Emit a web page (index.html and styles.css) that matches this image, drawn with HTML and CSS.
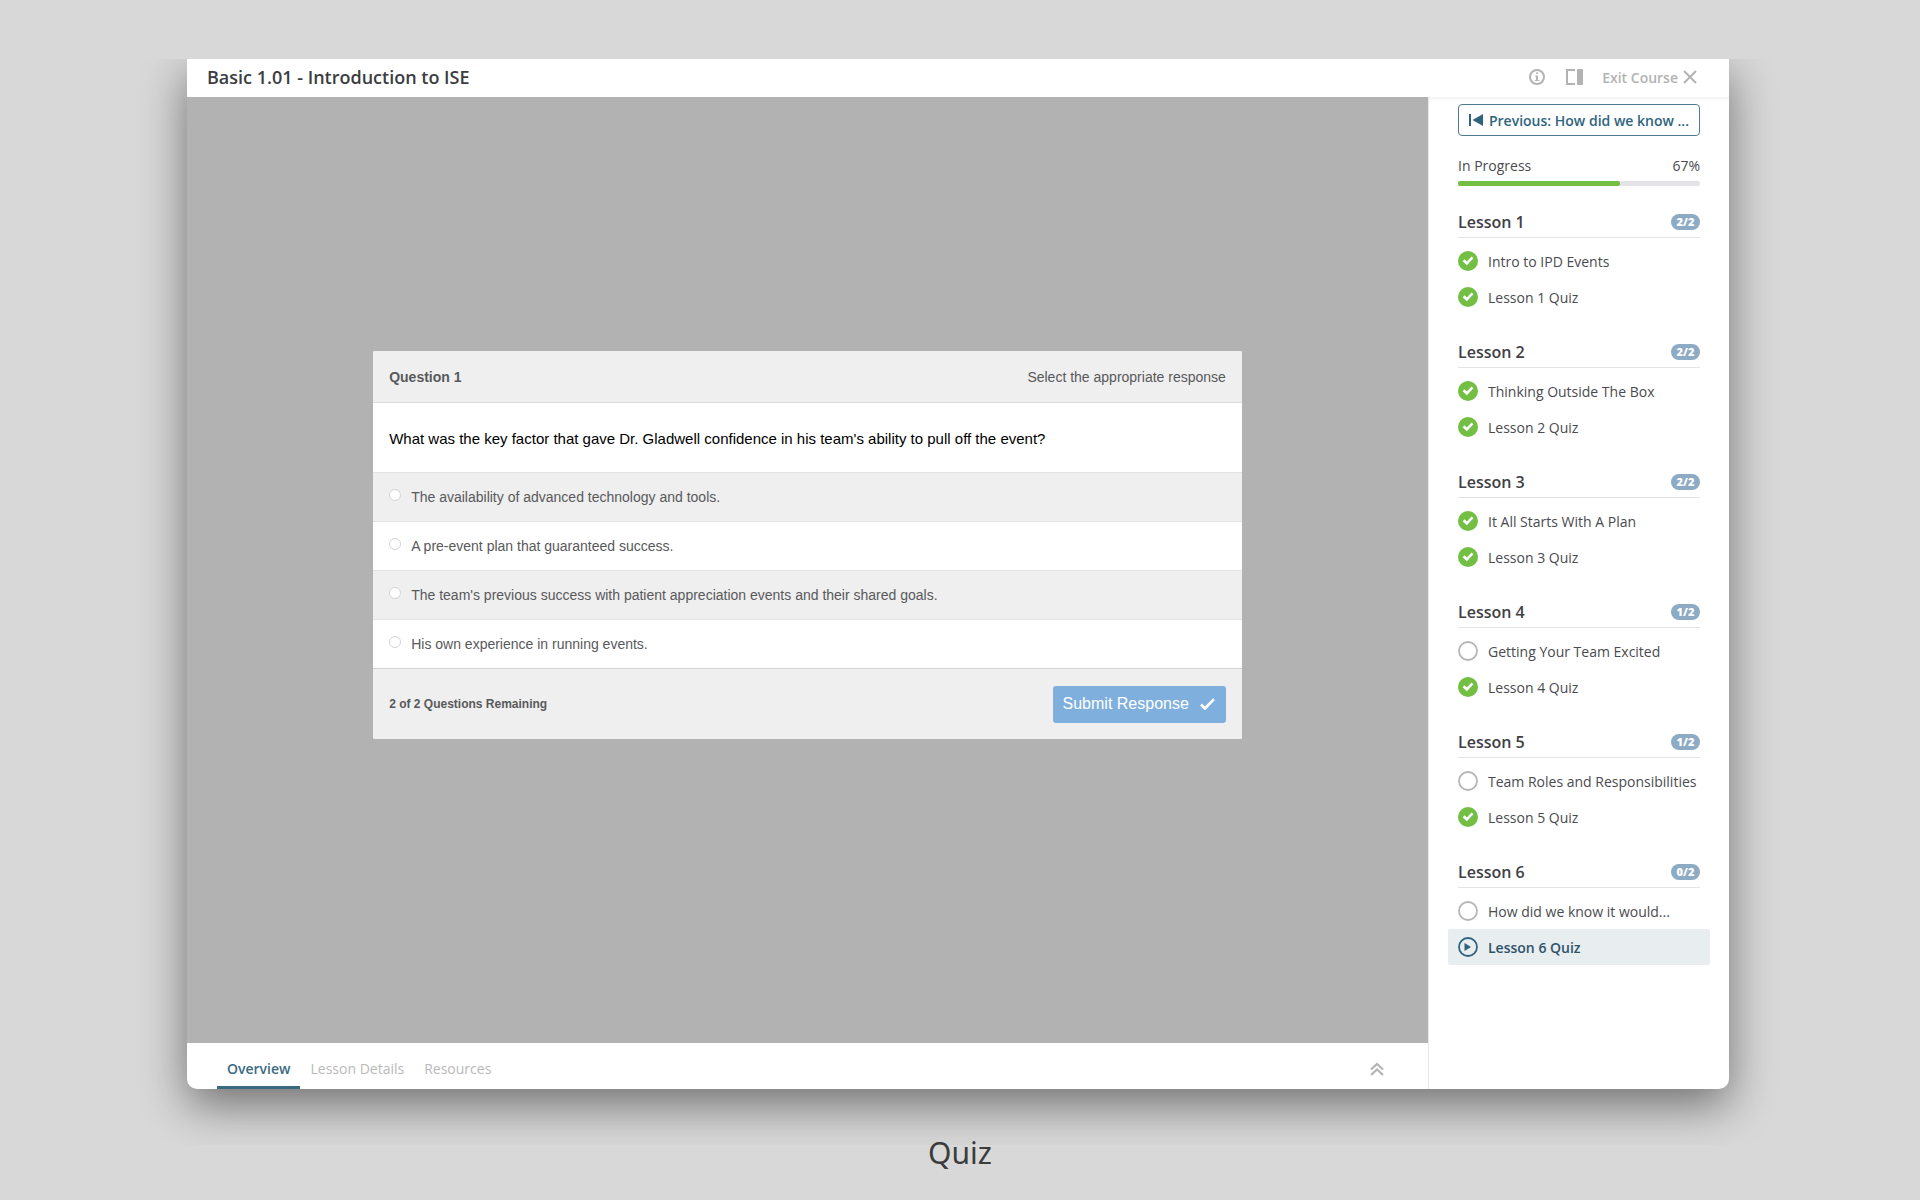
FILE: index.html
```html
<!DOCTYPE html>
<html lang="en">
<head>
  <meta charset="UTF-8">
  <meta name="viewport" content="width=device-width, initial-scale=1.0">
  <title>Basic 1.01 - Introduction to ISE</title>
  <link rel="stylesheet" href="styles.css">
</head>
<body>
  <!-- Shared icons -->
  <svg class="sprite" aria-hidden="true">
    <symbol id="icon-done" viewBox="0 0 20 20">
      <circle cx="10" cy="10" r="10" fill="#72bf44"/>
      <path d="M5.600 9.300l3.200 3.100 5.700-6" fill="none" stroke="#fff" stroke-width="2.600"/>
    </symbol>
    <symbol id="icon-todo" viewBox="0 0 20 20">
      <circle cx="10" cy="10" r="9" fill="#fff" stroke="#b5b5b5" stroke-width="1.800"/>
    </symbol>
    <symbol id="icon-play" viewBox="0 0 20 20">
      <circle cx="10" cy="10" r="9" fill="none" stroke="#2e647d" stroke-width="1.800"/>
      <path d="M6.500 6l6.500 4-6.500 4z" fill="#2e647d"/>
    </symbol>
  </svg>

  <figure class="slide">
    <div class="shadow-clip">
      <div class="window">

        <header class="topbar">
          <h1>Basic 1.01 - Introduction to ISE</h1>
          <div class="tools">
            <button class="tool" aria-label="Course info">
              <svg width="18" height="18" viewBox="0 0 18 18"><circle cx="9" cy="9" r="7" fill="none" stroke="currentColor" stroke-width="2"/><path d="M8 4.500h2v1.600H8zM7 7.500h3v4.500h1.200v1H6.800v-1H8V8.500H7z" fill="currentColor"/></svg>
            </button>
            <button class="tool" aria-label="Toggle sidebar">
              <svg width="18" height="18" viewBox="0 0 18 18"><path d="M10 2H2v14h8" fill="none" stroke="currentColor" stroke-width="2"/><rect x="12" y="1" width="6" height="16" rx="1" fill="currentColor"/></svg>
            </button>
            <a class="exit" href="#">Exit Course
              <svg width="14" height="14" viewBox="0 0 14 14"><path d="M1 1l12 12M13 1L1 13" stroke="currentColor" stroke-width="2"/></svg>
            </a>
          </div>
        </header>

        <div class="body">
          <main class="main">
            <div class="stage">
              <form class="quiz">
                <div class="quiz-head">
                  <h2>Question 1</h2>
                  <span>Select the appropriate response</span>
                </div>
                <p class="question" id="question">What was the key factor that gave Dr. Gladwell confidence in his team's ability to pull off the event?</p>
                <div class="answers" role="radiogroup" aria-labelledby="question">
                  <label class="answer"><input type="radio" name="answer"><span>The availability of advanced technology and tools.</span></label>
                  <label class="answer"><input type="radio" name="answer"><span>A pre-event plan that guaranteed success.</span></label>
                  <label class="answer"><input type="radio" name="answer"><span>The team's previous success with patient appreciation events and their shared goals.</span></label>
                  <label class="answer"><input type="radio" name="answer"><span>His own experience in running events.</span></label>
                </div>
                <div class="quiz-foot">
                  <span class="remaining">2 of 2 Questions Remaining</span>
                  <button class="submit" type="button">Submit Response
                    <svg width="15" height="12" viewBox="0 0 15 12"><path d="M1 6.500l4 4L14 1.200" fill="none" stroke="#fff" stroke-width="2.600"/></svg>
                  </button>
                </div>
              </form>
            </div>

            <nav class="tabs">
              <a class="tab active" href="#">Overview</a>
              <a class="tab" href="#">Lesson Details</a>
              <a class="tab" href="#">Resources</a>
              <button class="expand" aria-label="Expand panel">
                <svg width="14" height="14" viewBox="0 0 14 14"><path d="M1 7.500l6-5.500 6 5.500M1 13l6-5.500 6 5.500" fill="none" stroke="currentColor" stroke-width="2.200"/></svg>
              </button>
            </nav>
          </main>

          <aside class="sidebar">
            <button class="previous">
              <svg width="14" height="12" viewBox="0 0 14 12"><path d="M0 0h2v12H0zM14 0v12L3.500 6z" fill="currentColor"/></svg>
              <span>Previous: How did we know ...</span>
            </button>

            <div class="progress">
              <label for="course-progress">In Progress</label>
              <span>67%</span>
              <progress id="course-progress" value="67" max="100"></progress>
            </div>

            <section class="lesson">
              <h3>Lesson 1 <span class="count">2/2</span></h3>
              <a class="item" href="#"><svg><use href="#icon-done"/></svg>Intro to IPD Events</a>
              <a class="item" href="#"><svg><use href="#icon-done"/></svg>Lesson 1 Quiz</a>
            </section>
            <section class="lesson">
              <h3>Lesson 2 <span class="count">2/2</span></h3>
              <a class="item" href="#"><svg><use href="#icon-done"/></svg>Thinking Outside The Box</a>
              <a class="item" href="#"><svg><use href="#icon-done"/></svg>Lesson 2 Quiz</a>
            </section>
            <section class="lesson">
              <h3>Lesson 3 <span class="count">2/2</span></h3>
              <a class="item" href="#"><svg><use href="#icon-done"/></svg>It All Starts With A Plan</a>
              <a class="item" href="#"><svg><use href="#icon-done"/></svg>Lesson 3 Quiz</a>
            </section>
            <section class="lesson">
              <h3>Lesson 4 <span class="count">1/2</span></h3>
              <a class="item" href="#"><svg><use href="#icon-todo"/></svg>Getting Your Team Excited</a>
              <a class="item" href="#"><svg><use href="#icon-done"/></svg>Lesson 4 Quiz</a>
            </section>
            <section class="lesson">
              <h3>Lesson 5 <span class="count">1/2</span></h3>
              <a class="item" href="#"><svg><use href="#icon-todo"/></svg>Team Roles and Responsibilities</a>
              <a class="item" href="#"><svg><use href="#icon-done"/></svg>Lesson 5 Quiz</a>
            </section>
            <section class="lesson">
              <h3>Lesson 6 <span class="count">0/2</span></h3>
              <a class="item" href="#"><svg><use href="#icon-todo"/></svg>How did we know it would...</a>
              <a class="item current" href="#"><svg><use href="#icon-play"/></svg>Lesson 6 Quiz</a>
            </section>
          </aside>
        </div>

      </div>
    </div>
    <figcaption>Quiz</figcaption>
  </figure>
</body>
</html>
```
FILE: styles.css
```css
/* Global Styles */
* {
  box-sizing: border-box;
}

body {
  margin: 0;
  background-color: #d8d8d8;
  color: #4a4b4f;
  font-family: "Open Sans", "Noto Sans", sans-serif;
  font-size: 14px;
}

button {
  font-family: inherit;
  cursor: pointer;
}

a {
  color: inherit;
  text-decoration: none;
}

.sprite {
  display: none;
}

.slide {
  display: flex;
  flex-direction: column;
  min-height: 100vh;
  margin: 0;
  padding-top: 59px;
}

.slide figcaption {
  height: 55px;
  color: #3c3c3c;
  font-family: "Noto Sans", sans-serif;
  font-size: 30px;
  line-height: 16px;
  text-align: center;
}

/* Window */
.shadow-clip {
  display: flex;
  flex: 1;
  padding: 0 10% 56px;
  overflow: hidden;
}

.window {
  display: flex;
  flex: 1;
  flex-direction: column;
  margin: 0 -1px 0 -5px;
  border-radius: 0 0 10px 10px;
  background-color: #fff;
  box-shadow: 0 16px 46px rgba(0, 0, 0, 0.48);
}

.topbar {
  display: flex;
  align-items: center;
  justify-content: space-between;
  height: 38px;
  padding: 0 32px 2px 20px;
}

.topbar h1 {
  margin: 0;
  color: #3c3d41;
  font-size: 18px;
  font-weight: 600;
}

.tools {
  display: flex;
  align-items: center;
  gap: 19px;
  color: #b3b3b3;
}

.tool,
.expand {
  display: flex;
  padding: 0;
  border: none;
  background: none;
  color: #b3b3b3;
}

.exit {
  display: flex;
  align-items: center;
  gap: 5px;
  font-weight: 600;
}

.body {
  display: flex;
  flex: 1;
}

.main {
  display: flex;
  flex: 1;
  flex-direction: column;
}

.stage {
  display: flex;
  flex: 1;
  align-items: center;
  justify-content: center;
  padding-bottom: 50px;
  background-color: #b2b2b2;
}

/* Quiz */
.quiz {
  width: 70%;
  border-radius: 2px;
  background-color: #fff;
  color: #58595b;
  font-family: "Liberation Sans", Arial, sans-serif;
  overflow: hidden;
}

.quiz-head,
.quiz-foot {
  display: flex;
  align-items: center;
  justify-content: space-between;
  padding: 0 16px;
  background-color: #efefef;
}

.quiz-head {
  height: 52px;
  border-bottom: 1px solid #dcdcde;
}

.quiz-head h2 {
  margin: 0;
  font-size: 14px;
}

.question {
  margin: 0;
  padding: 25px 16px 22px;
  color: #000;
  font-size: 15px;
  line-height: 22px;
}

.answer {
  display: flex;
  align-items: center;
  gap: 10px;
  height: 49px;
  padding: 0 16px;
  border-top: 1px solid #e4e4e4;
}

.answer:nth-child(odd) {
  background-color: #efefef;
}

.answer input {
  appearance: none;
  width: 12px;
  height: 12px;
  margin: 0 0 4px;
  border: 1px solid #d4d4d4;
  border-radius: 50%;
  background-color: #fff;
}

.answer input:checked {
  border: 4px solid #7fb0dd;
}

.quiz-foot {
  height: 71px;
  border-top: 1px solid #d4d4d4;
}

.remaining {
  font-size: 12px;
  font-weight: bold;
}

.submit {
  display: flex;
  align-items: center;
  gap: 11px;
  height: 37px;
  padding: 0 11px 0 10px;
  border: none;
  border-radius: 3px;
  background-color: #7fb0dd;
  color: #fff;
  font-size: 16px;
}

/* Tabs */
.tabs {
  display: flex;
  height: 46px;
  padding: 0 44px 0 30px;
}

.tab {
  padding: 16px 10px 0;
  color: #b9b9b9;
  line-height: 20px;
}

.tab.active {
  border-bottom: 3px solid #3a6a82;
  color: #3a6a82;
  font-weight: 600;
}

.expand {
  align-items: center;
  margin-left: auto;
  padding-top: 6px;
}

/* Sidebar */
.sidebar {
  width: 301px;
  padding: 7px 29px 0;
  border-left: 1px solid #e8e8e8;
  box-shadow: inset 0 4px 4px -3px rgba(0, 0, 0, 0.08);
}

.previous {
  display: flex;
  align-items: center;
  justify-content: center;
  gap: 6px;
  width: 100%;
  height: 32px;
  padding: 0;
  border: 1px solid #4d7b92;
  border-radius: 4px;
  background-color: #fff;
  color: #2e647d;
  font-size: 14px;
  font-weight: 600;
}

.progress {
  display: grid;
  grid-template-columns: 1fr auto;
  row-gap: 5px;
  margin-top: 20px;
  line-height: 20px;
}

.progress progress {
  appearance: none;
  grid-column: 1 / 3;
  width: 100%;
  height: 5px;
  border: none;
}

.progress progress::-webkit-progress-bar {
  border-radius: 2px;
  background-color: #e4e3e8;
}

.progress progress::-webkit-progress-value {
  border-radius: 2px;
  background-color: #72bf44;
}

.lesson {
  margin-top: 22px;
}

.lesson:first-of-type {
  margin-top: 21px;
}

.lesson h3 {
  display: flex;
  align-items: center;
  justify-content: space-between;
  height: 31px;
  margin: 0 0 5px;
  border-bottom: 1px solid #e4e4e4;
  color: #3f4045;
  font-size: 16px;
  font-weight: 600;
}

.count {
  width: 29px;
  border-radius: 8px;
  background-color: #8dabc4;
  color: #fff;
  font-size: 11px;
  font-weight: 800;
  line-height: 16px;
  text-align: center;
}

.item {
  display: flex;
  align-items: center;
  gap: 10px;
  height: 36px;
  margin: 0 -10px;
  padding: 0 10px;
  border-radius: 2px;
  white-space: nowrap;
}

.item svg {
  width: 20px;
  height: 20px;
}

.item.current {
  background-color: #e8edf0;
  color: #2e5368;
  font-weight: 600;
}
```
